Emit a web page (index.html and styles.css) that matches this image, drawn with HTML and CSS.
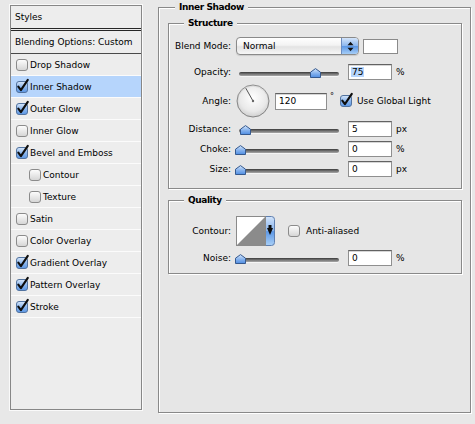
FILE: index.html
```html
<!DOCTYPE html>
<html>
<head>
<meta charset="utf-8">
<title>Layer Style</title>
<link rel="stylesheet" href="styles.css">
</head>
<body>
<svg class="defs" width="0" height="0" aria-hidden="true">
  <defs>
    <linearGradient id="g-off" x1="0" y1="0" x2="0" y2="1">
      <stop offset="0" stop-color="#fefefe"/>
      <stop offset="1" stop-color="#d4d4d4"/>
    </linearGradient>
    <linearGradient id="g-on" x1="0" y1="0" x2="0" y2="1">
      <stop offset="0" stop-color="#d8e8fb"/>
      <stop offset=".5" stop-color="#8cb7ee"/>
      <stop offset="1" stop-color="#5b96e4"/>
    </linearGradient>
    <linearGradient id="g-thumb" x1="0" y1="0" x2="0" y2="1">
      <stop offset="0" stop-color="#d6e7fb"/>
      <stop offset=".5" stop-color="#8ab5ee"/>
      <stop offset="1" stop-color="#4f8de2"/>
    </linearGradient>
    <radialGradient id="g-dial" cx=".5" cy=".4" r=".6">
      <stop offset="0" stop-color="#ffffff"/>
      <stop offset=".7" stop-color="#e9e9e9"/>
      <stop offset="1" stop-color="#cfcfcf"/>
    </radialGradient>
    <symbol id="cb-off" viewBox="0 0 12 12">
      <rect x=".5" y=".5" width="11" height="11" rx="2.5" fill="url(#g-off)" stroke="#8b8b8b"/>
    </symbol>
    <symbol id="cb-on" viewBox="0 0 12 12" overflow="visible">
      <rect x=".5" y=".5" width="11" height="11" rx="2.5" fill="url(#g-on)" stroke="#52739f"/>
      <path d="M2.3 5.6 L4.9 9.2 L11.8 -1.2" fill="none" stroke="#0d0d0d" stroke-width="2.1" stroke-linecap="round" stroke-linejoin="round"/>
    </symbol>
    <symbol id="thumb" viewBox="0 0 11 10">
      <path d="M0.5 4.2 L5.5 0.6 L10.5 4.2 L10.5 9.5 L0.5 9.5 Z" fill="url(#g-thumb)" stroke="#35598e" stroke-linejoin="round"/>
    </symbol>
  </defs>
</svg>

<div class="window">
  <div class="styles-list">
    <div class="list-head">Styles</div>
    <div class="list-blend">Blending Options: Custom</div>
    <div class="item"><svg class="cb"><use href="#cb-off"/></svg><span>Drop Shadow</span></div>
    <div class="item selected"><svg class="cb"><use href="#cb-on"/></svg><span>Inner Shadow</span></div>
    <div class="item"><svg class="cb"><use href="#cb-on"/></svg><span>Outer Glow</span></div>
    <div class="item"><svg class="cb"><use href="#cb-off"/></svg><span>Inner Glow</span></div>
    <div class="item"><svg class="cb"><use href="#cb-on"/></svg><span>Bevel and Emboss</span></div>
    <div class="item indent"><svg class="cb"><use href="#cb-off"/></svg><span>Contour</span></div>
    <div class="item indent"><svg class="cb"><use href="#cb-off"/></svg><span>Texture</span></div>
    <div class="item"><svg class="cb"><use href="#cb-off"/></svg><span>Satin</span></div>
    <div class="item"><svg class="cb"><use href="#cb-off"/></svg><span>Color Overlay</span></div>
    <div class="item"><svg class="cb"><use href="#cb-on"/></svg><span>Gradient Overlay</span></div>
    <div class="item"><svg class="cb"><use href="#cb-on"/></svg><span>Pattern Overlay</span></div>
    <div class="item"><svg class="cb"><use href="#cb-on"/></svg><span>Stroke</span></div>
  </div>

  <div class="options">
    <span class="legend">Inner Shadow</span>

    <div class="group structure">
      <span class="legend">Structure</span>

      <div class="row row-blend">
        <span class="label">Blend Mode:</span>
        <div class="popup">
          <span class="popup-text">Normal</span>
          <span class="popup-btn">
            <svg width="7" height="11" viewBox="0 0 7 11"><path d="M0.5 4.3 L3.5 0.8 L6.5 4.3 Z M0.5 6.7 L3.5 10.2 L6.5 6.7 Z" fill="#111"/></svg>
          </span>
        </div>
        <span class="swatch"></span>
      </div>

      <div class="row row-opacity">
        <span class="label">Opacity:</span>
        <div class="slider"><span class="track"></span><svg class="thumb" style="left:74px"><use href="#thumb"/></svg></div>
        <span class="field"><span class="sel">75</span></span>
        <span class="unit">%</span>
      </div>

      <div class="row row-angle">
        <span class="label">Angle:</span>
        <svg class="dial" width="34" height="34" viewBox="0 0 34 34">
          <circle cx="17" cy="17" r="16" fill="url(#g-dial)" stroke="#8e8e8e"/>
          <circle cx="17" cy="17.6" r="15.4" fill="none" stroke="rgba(0,0,0,.07)"/>
          <line x1="17" y1="17" x2="9.8" y2="4.2" stroke="#555" stroke-width="1"/>
          <circle cx="17" cy="17" r="1.2" fill="#666"/>
        </svg>
        <span class="field angle-field">120</span>
        <span class="deg">°</span>
        <svg class="cb cb-global"><use href="#cb-on"/></svg>
        <span class="cb-text">Use Global Light</span>
      </div>

      <div class="row row-dist">
        <span class="label">Distance:</span>
        <div class="slider"><span class="track"></span><svg class="thumb" style="left:4px"><use href="#thumb"/></svg></div>
        <span class="field">5</span>
        <span class="unit">px</span>
      </div>

      <div class="row">
        <span class="label">Choke:</span>
        <div class="slider"><span class="track"></span><svg class="thumb" style="left:-1px"><use href="#thumb"/></svg></div>
        <span class="field">0</span>
        <span class="unit">%</span>
      </div>

      <div class="row">
        <span class="label">Size:</span>
        <div class="slider"><span class="track"></span><svg class="thumb" style="left:-1px"><use href="#thumb"/></svg></div>
        <span class="field">0</span>
        <span class="unit">px</span>
      </div>
    </div>

    <div class="group quality">
      <span class="legend">Quality</span>

      <div class="row row-contour">
        <span class="label">Contour:</span>
        <svg class="contour" width="39" height="30" viewBox="0 0 39 30">
          <defs>
            <linearGradient id="g-btn" x1="0" y1="0" x2="0" y2="1">
              <stop offset="0" stop-color="#d3e4fa"/>
              <stop offset=".5" stop-color="#86b3ee"/>
              <stop offset=".52" stop-color="#5d98e6"/>
              <stop offset="1" stop-color="#a9cff6"/>
            </linearGradient>
          </defs>
          <path d="M29.5 0.5 H35.5 Q38.5 0.5 38.5 3.5 V26.5 Q38.5 29.5 35.5 29.5 H29.5 Z" fill="url(#g-btn)" stroke="#5f7faf"/>
          <rect x=".5" y=".5" width="29" height="29" fill="#fff" stroke="#8a8a8a"/>
          <path d="M1 29 L29 1 L29 29 Z" fill="#8b8b8b"/>
          <path d="M32.5 9 H35.5 V12 H37 L34 19 L31 12 H32.5 Z" fill="#0d0d0d"/>
        </svg>
        <svg class="cb cb-aa"><use href="#cb-off"/></svg>
        <span class="cb-text aa-text">Anti-aliased</span>
      </div>

      <div class="row">
        <span class="label">Noise:</span>
        <div class="slider"><span class="track"></span><svg class="thumb" style="left:-1px"><use href="#thumb"/></svg></div>
        <span class="field">0</span>
        <span class="unit">%</span>
      </div>
    </div>
  </div>
</div>
</body>
</html>
```

FILE: styles.css
```css
* {
  box-sizing: border-box;
}

html,
body {
  margin: 0;
  padding: 0;
}

body {
  width: 475px;
  height: 424px;
  overflow: hidden;
  background: #e8e8e8;
  font-family: "DejaVu Sans", "Liberation Sans", sans-serif;
  font-size: 9px;
  color: #000;
}

.defs {
  position: absolute;
  width: 0;
  height: 0;
  overflow: hidden;
}

.window {
  display: flex;
  align-items: flex-start;
  padding: 5px 0 0 10px;
}

/* ---------- left list ---------- */
.styles-list {
  width: 132px;
  height: 405px;
  flex: none;
  border: 1px solid #878787;
  background: #ededed;
  box-shadow: 0 0 0 1px #fafafa;
  display: flex;
  flex-direction: column;
}

.list-head {
  height: 25px;
  border-bottom: 3px double #262626;
  padding-left: 4px;
  display: flex;
  align-items: center;
}

.list-blend {
  height: 23px;
  border-bottom: 1px solid #4a4a4a;
  padding-left: 4px;
  display: flex;
  align-items: center;
}

.item {
  height: 22px;
  border-bottom: 1px solid #fbfbfb;
  display: flex;
  align-items: center;
  gap: 2px;
  padding-left: 5px;
}

.item.indent {
  padding-left: 18px;
}

.item.selected {
  background: #b6d5fc;
}

.cb {
  width: 12px;
  height: 12px;
  flex: none;
  overflow: visible;
}

/* ---------- right options ---------- */
.options {
  position: relative;
  margin: 2px 0 0 16px;
  width: 313px;
  height: 406px;
  flex: none;
  border: 1px solid #898989;
  box-shadow: inset 1px 1px 0 #fff, 1px 1px 0 #fff;
  background: #e6e6e6;
  padding: 15px 8px 0 9px;
}

.legend {
  position: absolute;
  top: -7px;
  left: 16px;
  padding: 0 4px;
  line-height: 13px;
  background: #e6e6e6;
  font-weight: bold;
  letter-spacing: -0.4px;
}

.group {
  position: relative;
  border: 1px solid #898989;
  box-shadow: inset 1px 1px 0 #fff, 1px 1px 0 #fff;
  display: flex;
  flex-direction: column;
}

.group .legend {
  left: 15px;
}

.structure {
  padding: 13px 0 11px;
}

.quality {
  margin-top: 11px;
  padding: 15px 0 7px;
}

.row {
  display: flex;
  align-items: center;
  height: 16px;
  margin-top: 4px;
}

.row-blend {
  height: 18px;
  margin-top: 0;
}

.row-opacity {
  margin-top: 9px;
}

.row-angle {
  height: 34px;
  margin-top: 4px;
}

.row-dist {
  margin-top: 3px;
}

.row-contour {
  height: 30px;
  margin-top: 0;
}

.label {
  width: 62px;
  flex: none;
  text-align: right;
  margin-right: 5px;
}

/* popup */
.popup {
  width: 123px;
  height: 18px;
  flex: none;
  display: flex;
  border: 1px solid #8a8a8a;
  border-radius: 4px;
  overflow: hidden;
  background: linear-gradient(#ffffff, #f3f3f3 45%, #e3e3e3 55%, #f6f6f6);
  box-shadow: 0 1px 1px rgba(0, 0, 0, 0.12);
}

.popup-text {
  flex: 1;
  padding-left: 6px;
  display: flex;
  align-items: center;
}

.popup-btn {
  width: 17px;
  flex: none;
  border-left: 1px solid #6c8cc0;
  background: linear-gradient(#d3e4fa, #8ab6ef 50%, #5d98e6 52%, #a6cdf6);
  display: flex;
  align-items: center;
  justify-content: center;
}

.swatch {
  width: 35px;
  height: 15px;
  flex: none;
  margin-left: 4px;
  border: 1px solid #8a8a8a;
  background: #fff;
}

/* slider */
.slider {
  position: relative;
  width: 103px;
  height: 16px;
  flex: none;
  margin-right: 9px;
}

.track {
  position: absolute;
  left: 3px;
  right: 0;
  top: 8px;
  height: 4px;
  border-radius: 2px;
  background: linear-gradient(#3a3a3a, #6f6f6f 45%, #a9a9a9);
  box-shadow: 0 1px 0 rgba(255, 255, 255, 0.6);
}

.thumb {
  position: absolute;
  top: 4px;
  width: 11px;
  height: 10px;
}

/* fields */
.field {
  width: 44px;
  height: 16px;
  flex: none;
  border: 1px solid #8f8f8f;
  border-top-color: #626262;
  background: #fff;
  box-shadow: inset 0 1px 0 #d6d6d6;
  padding-left: 3px;
  line-height: 14px;
}

.sel {
  background: #b6d5fc;
  padding: 0 1px;
  margin-left: -1px;
}

.unit {
  margin-left: 4px;
}

.dial {
  flex: none;
  margin-right: 5px;
}

.angle-field {
  width: 52px;
  height: 17px;
  line-height: 15px;
}

.deg {
  align-self: flex-start;
  margin: 8px 0 0 3px;
  font-size: 8px;
}

.cb-global {
  margin-left: 6px;
}

.cb-text {
  margin-left: 5px;
}

.contour {
  flex: none;
}

.cb-aa {
  margin-left: 13px;
}

.aa-text {
  margin-left: 6px;
}
```
